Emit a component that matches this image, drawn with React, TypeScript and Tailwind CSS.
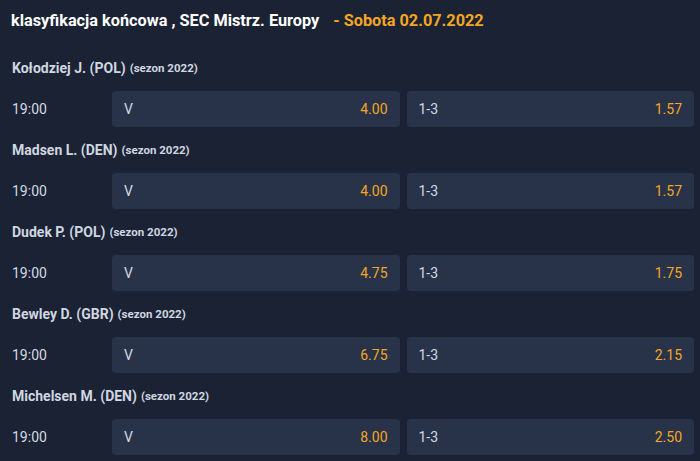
const rows = [
  { name: 'Kołodziej J. (POL)', v: '4.00', r: '1.57' },
  { name: 'Madsen L. (DEN)', v: '4.00', r: '1.57' },
  { name: 'Dudek P. (POL)', v: '4.75', r: '1.75' },
  { name: 'Bewley D. (GBR)', v: '6.75', r: '2.15' },
  { name: 'Michelsen M. (DEN)', v: '8.00', r: '2.50' },
];

export default function App() {
  return (
    <div className="min-h-screen bg-[#1a2233] font-['Roboto',sans-serif] pr-[6px]">
      <div className="h-[45px] flex items-start pt-[9px] pl-[11px] text-[16.3px] font-bold">
        <span className="text-white">klasyfikacja końcowa , SEC Mistrz. Europy</span>
        <span className="text-[#f5a623] ml-[14px]">- Sobota 02.07.2022</span>
      </div>
      {rows.map((row, i) => (
        <div key={i}>
          <div className="h-[46px] flex items-center pl-[12px] text-[#d0d6e0]">
            <span className="text-[14px] font-bold">{row.name}</span>
            <span className="text-[11.5px] font-bold ml-[4px] mt-[1px]">(sezon 2022)</span>
          </div>
          <div className="h-[36px] flex items-center">
            <div className="w-[112px] pl-[12px] text-[14px] text-[#d3d9e3]">19:00</div>
            <div className="flex-1 grid grid-cols-2 gap-[7px] h-full">
              <div className="bg-[#283349] rounded-[4px] flex items-center justify-between px-[12px] text-[14px]">
                <span className="text-[#d3d9e3]">V</span>
                <span className="text-[#f5a623]">{row.v}</span>
              </div>
              <div className="bg-[#283349] rounded-[4px] flex items-center justify-between px-[12px] text-[14px]">
                <span className="text-[#d3d9e3]">1-3</span>
                <span className="text-[#f5a623]">{row.r}</span>
              </div>
            </div>
          </div>
        </div>
      ))}
    </div>
  );
}
